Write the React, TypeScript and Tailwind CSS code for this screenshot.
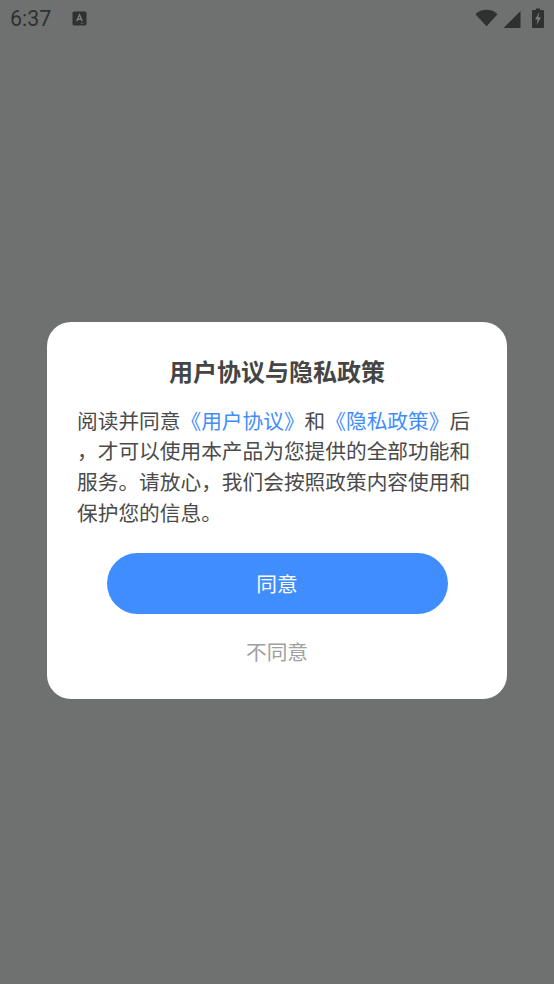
const cjk = "font-['Noto_Sans_CJK_SC','Noto_Sans',sans-serif]";

function StatusBar() {
  return (
    <div className="flex h-[36px] items-center justify-between pl-[10px] pr-[10px] text-[#2f3130]">
      <div className="flex items-center gap-[21px]">
        <span className="mt-[2px] font-['Roboto',sans-serif] text-[21.5px] leading-none">6:37</span>
        <svg width="15" height="15" viewBox="0 0 16 16" className="mt-[1px]">
          <rect x="0.5" y="0.5" width="15" height="15" rx="2" fill="#2f3130" />
          <path d="M5 11 L8 4 L11 11 M6.2 8.8 H9.8" stroke="#7a7c7b" strokeWidth="1.5" fill="none" />
          <path d="M9.5 13 H13" stroke="#7a7c7b" strokeWidth="1" strokeDasharray="1 0.6" fill="none" />
        </svg>
      </div>
      <div className="flex items-center gap-[5px]">
        <svg width="23" height="18" viewBox="0 0 24 18">
          <path d="M0.5 5 C3.5 2 7.5 0.5 12 0.5 C16.5 0.5 20.5 2 23.5 5 L12 17.5 Z" fill="#2f3130" />
        </svg>
        <svg width="18" height="18" viewBox="0 0 18 18" className="mt-[1px]">
          <path d="M0.5 18 L17.5 1 V18 Z" fill="#2f3130" />
        </svg>
        <svg width="12" height="20" viewBox="0 0 12 20" className="ml-[6px]">
          <path d="M4 0.5 H8 V2 H11 A1 1 0 0 1 12 3 V19 A1 1 0 0 1 11 20 H1 A1 1 0 0 1 0 19 V3 A1 1 0 0 1 1 2 H4 Z" fill="#2f3130" />
          <path d="M7.5 4 L3 11.5 H5.6 L4.6 17 L9 9.2 H6.3 Z" fill="#7a7c7b" />
        </svg>
      </div>
    </div>
  );
}

export default function App() {
  return (
    <div className={`${cjk} flex h-[984px] w-[554px] flex-col overflow-hidden bg-[#6f7170]`}>
      <StatusBar />
      <div className="flex flex-1 items-start justify-center pt-[286px]">
        <div className="flex h-[376.5px] w-[460px] flex-col items-center rounded-[24px] bg-white px-[30px]">
          <h1 className="mt-[33px] text-[24px] font-bold leading-[32px] text-[#454545]">用户协议与隐私政策</h1>
          <div className="mt-[17.5px] w-full whitespace-nowrap text-[20.7px] leading-[30.7px] text-[#4a4a4a]">
            <p>
              阅读并同意<span className="text-[#408dff]">《用户协议》</span>和<span className="text-[#408dff]">《隐私政策》</span>后
            </p>
            <p>，才可以使用本产品为您提供的全部功能和</p>
            <p>服务。请放心，我们会按照政策内容使用和</p>
            <p>保护您的信息。</p>
          </div>
          <button type="button" className="mt-[25.5px] h-[61px] w-[341px] shrink-0 rounded-full bg-[#408dff] pt-[1px] text-[20.7px] text-white">
            同意
          </button>
          <button type="button" className="mt-[22px] text-[20.7px] leading-[31px] text-[#a0a0a0]">
            不同意
          </button>
        </div>
      </div>
    </div>
  );
}
